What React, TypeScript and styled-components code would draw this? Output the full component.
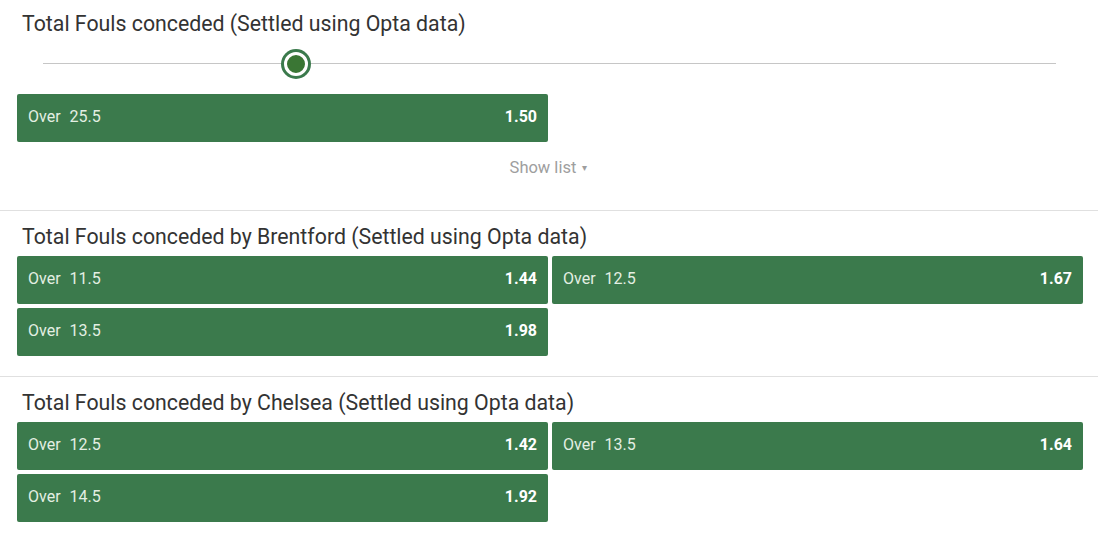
import React from "react";
import styled, { createGlobalStyle } from "styled-components";

const GlobalStyle = createGlobalStyle`
  html, body {
    margin: 0;
    padding: 0;
    background: #ffffff;
    font-family: Roboto, "Liberation Sans", Arial, sans-serif;
  }
`;

type Outcome = { line: string; odds: string };

type Market = {
  title: string;
  outcomes: Outcome[];
  slider?: number;
};

const markets: Market[] = [
  {
    title: "Total Fouls conceded (Settled using Opta data)",
    outcomes: [{ line: "25.5", odds: "1.50" }],
    slider: 25,
  },
  {
    title: "Total Fouls conceded by Brentford (Settled using Opta data)",
    outcomes: [
      { line: "11.5", odds: "1.44" },
      { line: "12.5", odds: "1.67" },
      { line: "13.5", odds: "1.98" },
    ],
  },
  {
    title: "Total Fouls conceded by Chelsea (Settled using Opta data)",
    outcomes: [
      { line: "12.5", odds: "1.42" },
      { line: "13.5", odds: "1.64" },
      { line: "14.5", odds: "1.92" },
    ],
  },
];

function App() {
  return (
    <>
      <GlobalStyle />
      <Page>
        {markets.map((m, i) => (
          <Section key={m.title} $first={i === 0} $last={i === markets.length - 1}>
            <Title>{m.title}</Title>
            {m.slider !== undefined ? (
              <>
                <Slider>
                  <Track>
                    <Thumb style={{ left: `${m.slider}%` }} />
                  </Track>
                </Slider>
                <Grid>
                  <OddsButton>
                    <Label>
                      Over<Line>{m.outcomes[0].line}</Line>
                    </Label>
                    <Odds>{m.outcomes[0].odds}</Odds>
                  </OddsButton>
                </Grid>
                <ShowList>
                  Show list <Caret>▾</Caret>
                </ShowList>
              </>
            ) : (
              <Grid $gapTop>
                {m.outcomes.map((o) => (
                  <OddsButton key={o.line}>
                    <Label>
                      Over<Line>{o.line}</Line>
                    </Label>
                    <Odds>{o.odds}</Odds>
                  </OddsButton>
                ))}
              </Grid>
            )}
          </Section>
        ))}
      </Page>
    </>
  );
}

const Page = styled.div`
  width: 1098px;
  display: flex;
  flex-direction: column;
`;

const Section = styled.section<{ $first?: boolean; $last?: boolean }>`
  padding: ${(p) => (p.$first ? "12px 15px 32px 17px" : "14px 15px 20px 17px")};
  border-bottom: ${(p) => (p.$last ? "none" : "1px solid #e0e0e0")};
`;

const Title = styled.h2`
  margin: 0 0 0 5px;
  font-size: 21.3px;
  line-height: 24px;
  font-weight: 400;
  color: #333333;
`;

const Slider = styled.div`
  height: 58px;
  display: flex;
  align-items: center;
  padding: 0 27px 0 26px;
  box-sizing: border-box;
`;

const Track = styled.div`
  position: relative;
  flex: 1;
  height: 1px;
  background: #c6c6c6;
  margin-top: -3px;
`;

const Thumb = styled.div`
  position: absolute;
  top: 50%;
  width: 24px;
  height: 24px;
  box-sizing: border-box;
  border-radius: 50%;
  background: #3a7634;
  border: 3px solid #ffffff;
  box-shadow: 0 0 0 3px #3b7a4c;
  transform: translate(-50%, -50%);
`;

const Grid = styled.div<{ $gapTop?: boolean }>`
  display: grid;
  grid-template-columns: 531px 531px;
  column-gap: 4px;
  row-gap: 4px;
  margin-top: ${(p) => (p.$gapTop ? "7px" : "0")};
`;

const OddsButton = styled.button`
  height: 48px;
  display: flex;
  align-items: center;
  justify-content: space-between;
  padding: 0 11px 3px;
  border: none;
  border-radius: 2px;
  background: #3b7a4c;
  font-family: Roboto, "Liberation Sans", Arial, sans-serif;
  font-size: 16px;
  cursor: pointer;
`;

const Label = styled.span`
  color: #e4efe3;
`;

const Line = styled.span`
  margin-left: 9px;
`;

const Odds = styled.span`
  color: #ffffff;
  font-weight: 700;
`;

const ShowList = styled.div`
  margin-top: 16px;
  text-align: center;
  font-size: 16.5px;
  line-height: 20px;
  color: #9e9e9e;
  padding-right: 3px;
`;

const Caret = styled.span`
  font-size: 10px;
  margin-left: 2px;
  vertical-align: 2px;
`;

export default App;
